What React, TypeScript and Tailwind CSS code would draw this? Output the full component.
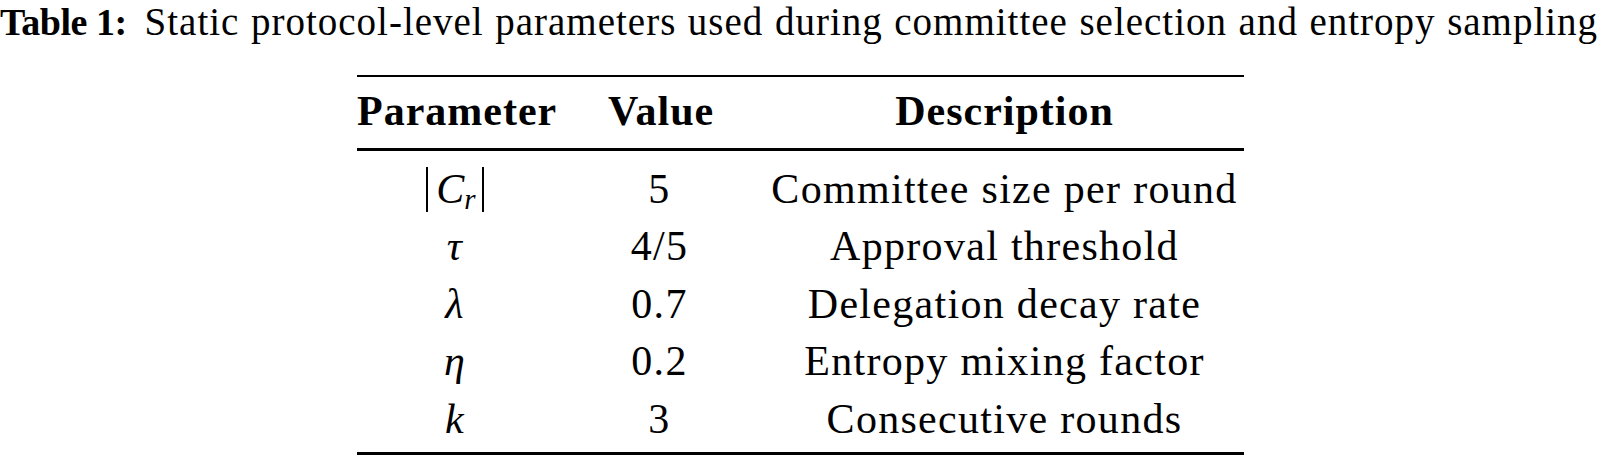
const rows = [
  { param: 'cr', value: '5', desc: 'Committee size per round' },
  { param: 'τ', value: '4/5', desc: 'Approval threshold' },
  { param: 'λ', value: '0.7', desc: 'Delegation decay rate' },
  { param: 'η', value: '0.2', desc: 'Entropy mixing factor' },
  { param: 'k', value: '3', desc: 'Consecutive rounds' },
];

// tall |…| delimiter; negative margin keeps it from stretching the row
function Bar() {
  return <span className="inline-block w-[2px] h-[45px] -mt-[30px] bg-black relative top-[9px]" />;
}

function Param({ name }: { name: string }) {
  if (name === 'cr') {
    return (
      <span className="tracking-normal">
        <Bar />
        <span className="italic ml-[8px]">C</span>
        <span className="italic text-[29px] leading-none relative top-[6px]">r</span>
        <span className="ml-[6px]" />
        <Bar />
      </span>
    );
  }
  return <span className="italic">{name}</span>;
}

export default function App() {
  return (
    <div className="w-[1601px] h-[457px] bg-white text-black font-['Liberation_Serif',serif] overflow-hidden">
      {/* caption */}
      <div className="text-[39px] leading-[43.2px] whitespace-nowrap">
        <span className="font-bold text-[38px] tracking-[-0.5px]">Table 1:</span>
        <span className="ml-[18px] tracking-[1px] [word-spacing:0.8px]">
          Static protocol-level parameters used during committee selection and entropy sampling
        </span>
      </div>

      {/* booktabs-style table */}
      <div className="ml-[357px] mt-[30.3px] w-[887px] text-[42px] leading-[57.5px] tracking-[1.3px]">
        <div className="h-[2.6px] bg-black" />
        <div className="grid grid-cols-[196px_103px_477px] gap-x-[55px] pt-[6px] pb-[7.4px] text-center font-bold tracking-[1px]">
          <div>Parameter</div>
          <div>Value</div>
          <div>Description</div>
        </div>
        <div className="h-[2.6px] bg-black" />
        <div className="pt-[10px] pb-[4px]">
          {rows.map((r) => (
            <div key={r.value + r.desc} className="grid grid-cols-[196px_103px_477px] gap-x-[55px] text-center whitespace-nowrap">
              <div>
                <Param name={r.param} />
              </div>
              <div>{r.value}</div>
              <div>{r.desc}</div>
            </div>
          ))}
        </div>
        <div className="h-[2.6px] bg-black" />
      </div>
    </div>
  );
}
